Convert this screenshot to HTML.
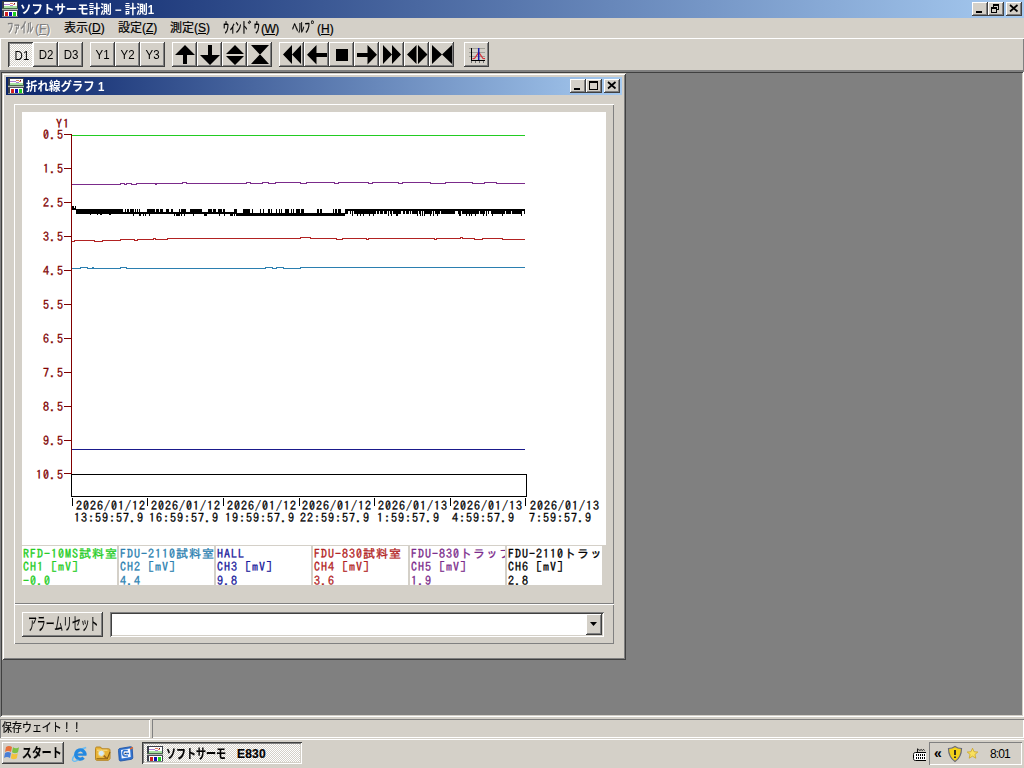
<!DOCTYPE html><html lang="ja"><head><meta charset="utf-8"><title>ソフトサーモ計測 - 計測1</title><style>
*{box-sizing:border-box;margin:0;padding:0}
html,body{width:1024px;height:768px;overflow:hidden;background:#d4d0c8}
body{position:relative;font-family:"Liberation Sans","Noto Sans CJK JP",sans-serif;font-size:12px;color:#000;line-height:1}
.abs{position:absolute}
.ui{font-family:"Liberation Sans","Noto Sans CJK JP",sans-serif;font-size:12px;white-space:nowrap;-webkit-text-stroke:0.2px currentColor}
.mono{font-family:"IPAGothic","Liberation Mono",monospace;font-size:12px;letter-spacing:1px;white-space:pre;line-height:13px;-webkit-text-stroke:0.3px currentColor}
.title{position:absolute;height:18px;background:linear-gradient(90deg,#0a246a 0%,#a6caf0 100%);color:#fff;font-weight:bold}
.title .t{position:absolute;top:2px;font-size:12px;line-height:16px;white-space:nowrap;font-weight:bold;transform-origin:0 50%;transform:scaleX(0.955)}
.cb{position:absolute;width:16px;height:14px;background:#d4d0c8;box-shadow:inset -1px -1px 0 #404040,inset 1px 1px 0 #fff,inset -2px -2px 0 #808080}
.cb svg{position:absolute;left:0;top:0}
.tb{position:absolute;top:42px;width:25px;height:25px;background:#d4d0c8;box-shadow:inset -1px -1px 0 #404040,inset 1px 1px 0 #fff,inset -2px -2px 0 #808080;text-align:center;font-size:12.500px;line-height:27px}
.tb span{display:inline-block;transform:scaleX(0.92)}
.tb svg{position:absolute;left:0;top:0}
.tb.down{background-color:#fff;background-image:conic-gradient(#d4d0c8 25%,#fff 0 50%,#d4d0c8 0 75%,#fff 0);background-size:2px 2px;box-shadow:inset 1px 1px 0 #404040,inset -1px -1px 0 #fff,inset 2px 2px 0 #808080;line-height:29px;text-indent:1px}
.menu{-webkit-text-stroke:0.2px currentColor;position:absolute;top:22px;font-size:12px;line-height:12px;white-space:nowrap}
.menu u{text-decoration:underline;text-underline-offset:1px}
.hk{font-family:"IPAGothic","Noto Sans CJK JP",monospace;font-size:15px;display:inline-block;transform:scaleX(0.82);transform-origin:0 50%;line-height:12px;vertical-align:baseline}
.raised{position:absolute;box-shadow:inset 1px 1px 0 #fff,inset -1px -1px 0 #808080}
.sx{display:inline-block;transform-origin:0 50%;white-space:nowrap}
.leg{position:absolute;top:546px;height:39px;background:#fff;overflow:hidden}
.leg div{position:absolute;left:1px}
</style></head><body>
<div class="title" style="left:0;top:0;width:1024px"><svg class="abs" style="left:2px;top:1px" width="16" height="16" viewBox="0 0 16 16" shape-rendering="crispEdges">
<rect x="0" y="0" width="16" height="16" fill="#3a3f4a"/>
<rect x="2" y="1" width="13" height="6" fill="#fff"/>
<rect x="2" y="5" width="13" height="2" fill="#a6e0a0"/>
<path d="M2 3.5h6M8 4.5h3" stroke="#b080d0" stroke-width="1"/>
<path d="M8 2.5h3M11 3.5h2" stroke="#e08060" stroke-width="1"/>
<rect x="12" y="2" width="1" height="1" fill="#601040"/>
<rect x="0" y="7" width="16" height="1" fill="#4a6a4a"/>
<rect x="0" y="8" width="16" height="1" fill="#b8b8b8"/>
<rect x="0" y="9" width="16" height="1" fill="#50505a"/>
<rect x="2" y="10" width="13" height="5" fill="#fff"/>
<rect x="3" y="11" width="3" height="4" fill="#d02020"/>
<rect x="7" y="11" width="3" height="4" fill="#1010b0"/>
<rect x="11" y="11" width="3" height="4" fill="#20d020"/>
<rect x="0" y="15" width="16" height="1" fill="#7a8088"/>
</svg><span class="t" id="mt" style="left:20px">ソフトサーモ計測 − 計測1</span></div>
<div class="cb" style="left:972px;top:2px"><svg width="16" height="14"><rect x="4" y="9" width="6" height="2" fill="#000"/></svg></div><div class="cb" style="left:988px;top:2px"><svg width="16" height="14"><path d="M5 2h6v6h-2v-1h1v-3h-4v1h-1z M3 5h6v6h-6z M4 7v3h4v-3z" fill="#000" fill-rule="evenodd"/></svg></div><div class="cb" style="left:1006px;top:2px"><svg width="16" height="14"><path d="M4 3l7.500 6.500M11.500 3l-7.500 6.500" stroke="#000" stroke-width="1.700" fill="none"/></svg></div>
<div class="menu" id="m0" style="left:7px;color:#808080;text-shadow:1px 1px 0 #fff"><span class="hk" style="margin-right:-4px;transform:scaleX(0.88)">ﾌｧｲﾙ</span><span style="margin-left:2px">(<u>F</u>)</span></div>
<div class="menu" id="m1" style="left:64px">表示(<u>D</u>)</div>
<div class="menu" id="m2" style="left:118px">設定(<u>Z</u>)</div>
<div class="menu" id="m3" style="left:170px">測定(<u>S</u>)</div>
<div class="menu" id="m4" style="left:223px"><span class="hk" style="margin-right:-8px">ｳｨﾝﾄﾞｳ</span><span style="margin-left:1px;letter-spacing:-0.6px">(<u>W</u>)</span></div>
<div class="menu" id="m5" style="left:292px"><span class="hk" style="margin-right:-5px">ﾍﾙﾌﾟ</span><span style="margin-left:0px">(<u>H</u>)</span></div>
<div class="abs" style="left:0;top:38px;width:1024px;height:1px;background:#fff"></div>
<div class="abs" style="left:1023px;top:39px;width:1px;height:31px;background:#808080"></div>
<div class="abs" style="left:0;top:70px;width:1024px;height:1px;background:#808080"></div>
<div class="abs" style="left:0;top:38px;width:1px;height:32px;background:#fff"></div>
<div class="tb down" style="left:8px"><span>D1</span></div><div class="tb " style="left:33px"><span>D2</span></div><div class="tb " style="left:58px"><span>D3</span></div><div class="tb " style="left:90px"><span>Y1</span></div><div class="tb " style="left:115px"><span>Y2</span></div><div class="tb " style="left:140px"><span>Y3</span></div>
<div class="tb " style="left:172px"><svg width="25" height="25" viewBox="0 0 25 25"><path d="M13 3L23 13H15V22H11V13H3Z" fill="#000"/></svg></div>
<div class="tb " style="left:197px"><svg width="25" height="25" viewBox="0 0 25 25"><path d="M11 3H15V13H23L13 23L3 13H11Z" fill="#000"/></svg></div>
<div class="tb " style="left:222px"><svg width="25" height="25" viewBox="0 0 25 25"><path d="M13 3L22 12H4Z M4 14H22L13 23Z" fill="#000"/></svg></div>
<div class="tb " style="left:247px"><svg width="25" height="25" viewBox="0 0 25 25"><path d="M4 3H22L13 12.700Z M4 22H22L13 12.300Z" fill="#000"/></svg></div>
<div class="tb " style="left:279px"><svg width="25" height="25" viewBox="0 0 25 25"><path d="M13 3V22L4 12.500Z M22 3V22L13 12.500Z" fill="#000"/></svg></div>
<div class="tb " style="left:304px"><svg width="25" height="25" viewBox="0 0 25 25"><path d="M3 12.700L12.500 3V11H23V15H12.500V22.500Z" fill="#000"/></svg></div>
<div class="tb " style="left:329px"><svg width="25" height="25" viewBox="0 0 25 25"><rect x="7" y="7" width="12" height="12" fill="#000"/></svg></div>
<div class="tb " style="left:354px"><svg width="25" height="25" viewBox="0 0 25 25"><path d="M23 12.700L13.500 3V11H3V15H13.500V22.500Z" fill="#000"/></svg></div>
<div class="tb " style="left:379px"><svg width="25" height="25" viewBox="0 0 25 25"><path d="M4 3V22L13 12.500Z M13 3V22L22 12.500Z" fill="#000"/></svg></div>
<div class="tb " style="left:404px"><svg width="25" height="25" viewBox="0 0 25 25"><path d="M12.500 3V22L3 12.500Z M14 3V22L23.500 12.500Z" fill="#000"/></svg></div>
<div class="tb " style="left:429px"><svg width="25" height="25" viewBox="0 0 25 25"><path d="M3 3V22L13 12.500Z M23 3V22L13 12.500Z" fill="#000"/></svg></div>
<div class="tb " style="left:464px"><svg width="25" height="25" viewBox="0 0 25 25"><g shape-rendering="crispEdges"><path d="M5 6.500h16M5 10.500h16M5 14.500h16" stroke="#a0a098" stroke-width="1"/><path d="M7.500 6v13M7 18.500h14" stroke="#000" stroke-width="1"/><path d="M7.500 19v2M11.500 19v2M15.500 19v2M19.500 19v2" stroke="#707070" stroke-width="1"/></g><path d="M8.500 16.700L10.500 16.500L14.800 10.300L19 16.500L21 16.700" stroke="#d83038" stroke-width="1.200" fill="none"/><path d="M14.700 6v12" stroke="#1818b0" stroke-width="1.500"/></svg></div>
<div class="abs" style="left:0;top:71px;width:1024px;height:646px;background:#808080;box-shadow:inset 1px 1px 0 #808080,inset -1px -1px 0 #fff,inset 2px 2px 0 #404040,inset -2px -2px 0 #d4d0c8"></div>
<div class="abs" style="left:2px;top:73px;width:624px;height:587px;background:#d4d0c8;box-shadow:inset 1px 1px 0 #d4d0c8,inset -1px -1px 0 #404040,inset 2px 2px 0 #fff,inset -2px -2px 0 #808080"></div>
<div class="title" style="left:6px;top:77px;width:616px"><svg class="abs" style="left:2px;top:1px" width="16" height="16" viewBox="0 0 16 16" shape-rendering="crispEdges">
<rect x="0" y="0" width="16" height="16" fill="#3a3f4a"/>
<rect x="2" y="1" width="13" height="6" fill="#fff"/>
<rect x="2" y="5" width="13" height="2" fill="#a6e0a0"/>
<path d="M2 3.5h6M8 4.5h3" stroke="#b080d0" stroke-width="1"/>
<path d="M8 2.5h3M11 3.5h2" stroke="#e08060" stroke-width="1"/>
<rect x="12" y="2" width="1" height="1" fill="#601040"/>
<rect x="0" y="7" width="16" height="1" fill="#4a6a4a"/>
<rect x="0" y="8" width="16" height="1" fill="#b8b8b8"/>
<rect x="0" y="9" width="16" height="1" fill="#50505a"/>
<rect x="2" y="10" width="13" height="5" fill="#fff"/>
<rect x="3" y="11" width="3" height="4" fill="#d02020"/>
<rect x="7" y="11" width="3" height="4" fill="#1010b0"/>
<rect x="11" y="11" width="3" height="4" fill="#20d020"/>
<rect x="0" y="15" width="16" height="1" fill="#7a8088"/>
</svg><span class="t" id="ct" style="left:20px">折れ線グラフ 1</span></div>
<div class="cb" style="left:570px;top:79px"><svg width="16" height="14"><rect x="4" y="9" width="6" height="2" fill="#000"/></svg></div><div class="cb" style="left:586px;top:79px"><svg width="16" height="14"><path d="M3 2h9v9h-9z M4 4v6h7v-6z" fill="#000" fill-rule="evenodd"/></svg></div><div class="cb" style="left:604px;top:79px"><svg width="16" height="14"><path d="M4 3l7.500 6.500M11.500 3l-7.500 6.500" stroke="#000" stroke-width="1.700" fill="none"/></svg></div>
<div class="raised" style="left:14px;top:104px;width:600px;height:500px"></div>
<div class="abs" style="left:22px;top:112px;width:584px;height:433px;background:#fff"></div>
<svg class="abs" style="left:0;top:0" width="640" height="600" viewBox="0 0 640 600" shape-rendering="crispEdges" fill="none" stroke-width="1">
<path d="M71.5 134V474" stroke="#800000"/>
<path d="M64 134.5H71M64 168.5H71M64 202.5H71M64 236.5H71M64 270.5H71M64 304.5H71M64 338.5H71M64 372.5H71M64 406.5H71M64 440.5H71M64 473.5H71" stroke="#800000"/>
<path d="M71.500 474.500H526.500V496.500H71.500Z" stroke="#000"/>
<path d="M72.5 498V506M147.5 498V506M223.5 498V506M299.5 498V506M374.5 498V506M450.5 498V506M525.5 498V506" stroke="#000"/>
<path d="M72 135.5H525" stroke="#22cc22"/>
<path d="M72 184.5H120H120V183.5H124H124V184.5H126H126V183.5H131H131V184.5H136H136V183.5H155H155V184.5H156H156V183.5H182H182V182.5H186H186V183.5H246H246V182.5H250H250V183.5H262H262V182.5H268H268V183.5H275H275V182.5H300H300V183.5H306H306V182.5H334H334V183.5H338H338V182.5H368H368V183.5H372H372V182.5H398H398V183.5H402H402V182.5H430H430V183.5H445H445V182.5H472H472V183.5H484H484V182.5H496H496V183.5H525" stroke="#7b2b8b"/>
<path d="M72 241.5H74H74V240.5H94H94V241.5H102H102V240.5H120H120V239.5H134H134V240.5H137H137V239.5H153H153V238.5H155H155V239.5H167H167V238.5H300H300V237.5H310H310V238.5H336H336V239.5H342H342V238.5H366H366V239.5H368H368V238.5H434H434V239.5H436H436V238.5H460H460V237.5H462H462V238.5H474H474V239.5H482H482V238.5H502H502V239.5H525" stroke="#b22222"/>
<path d="M72 268.5H80H80V267.5H87H87V268.5H92H92V267.5H93H93V268.5H120H120V267.5H126H126V268.5H265H265V267.5H272H272V268.5H276H276V267.5H283H283V268.5H300H300V267.5H525" stroke="#2b7fb0"/>
<path d="M72 449.5H525" stroke="#1a1a8c"/>
<path d="M72 206h1v4h-1zM73 206h1v4h-1zM74 208h1v2h-1zM75 206h1v4h-1zM76 209h1v5h-1zM77 209h1v5h-1zM78 209h1v5h-1zM79 209h1v5h-1zM80 209h1v5h-1zM81 209h1v5h-1zM82 209h1v5h-1zM83 209h1v5h-1zM84 209h1v5h-1zM85 209h1v5h-1zM86 209h1v5h-1zM87 209h1v5h-1zM88 209h1v5h-1zM89 209h1v5h-1zM90 209h1v6h-1zM91 209h1v5h-1zM92 209h1v5h-1zM93 209h1v5h-1zM94 209h1v5h-1zM95 209h1v5h-1zM96 209h1v5h-1zM97 209h1v6h-1zM98 209h1v5h-1zM99 209h1v5h-1zM100 209h1v6h-1zM101 209h1v6h-1zM102 209h1v5h-1zM103 209h1v5h-1zM104 209h1v5h-1zM105 209h1v5h-1zM106 209h1v5h-1zM107 209h1v5h-1zM108 209h1v5h-1zM109 209h1v6h-1zM110 209h1v6h-1zM111 209h1v5h-1zM112 209h1v5h-1zM113 209h1v5h-1zM114 209h1v5h-1zM115 209h1v5h-1zM116 209h1v5h-1zM117 209h1v5h-1zM118 209h1v5h-1zM119 209h1v5h-1zM120 209h1v5h-1zM121 209h1v5h-1zM122 209h1v5h-1zM123 212h1v2h-1zM124 212h1v2h-1zM125 209h1v5h-1zM126 212h1v2h-1zM127 209h1v5h-1zM128 209h1v5h-1zM129 212h1v2h-1zM130 209h1v5h-1zM131 209h1v5h-1zM132 209h1v5h-1zM133 209h1v7h-1zM134 212h1v2h-1zM135 209h1v5h-1zM136 212h1v2h-1zM137 209h1v5h-1zM138 212h1v2h-1zM139 209h1v7h-1zM140 212h1v4h-1zM141 212h1v2h-1zM142 212h1v2h-1zM143 212h1v4h-1zM144 212h1v2h-1zM145 212h1v4h-1zM146 212h1v2h-1zM147 209h1v5h-1zM148 209h1v5h-1zM149 209h1v7h-1zM150 209h1v5h-1zM151 209h1v5h-1zM152 209h1v5h-1zM153 209h1v5h-1zM154 209h1v5h-1zM155 212h1v2h-1zM156 209h1v5h-1zM157 209h1v5h-1zM158 209h1v5h-1zM159 212h1v2h-1zM160 209h1v5h-1zM161 209h1v5h-1zM162 209h1v5h-1zM163 212h1v2h-1zM164 212h1v2h-1zM165 212h1v2h-1zM166 209h1v5h-1zM167 209h1v5h-1zM168 209h1v5h-1zM169 212h1v2h-1zM170 212h1v2h-1zM171 209h1v5h-1zM172 209h1v5h-1zM173 212h1v2h-1zM174 212h1v4h-1zM175 212h1v2h-1zM176 212h1v4h-1zM177 212h1v4h-1zM178 212h1v4h-1zM179 209h1v7h-1zM180 212h1v2h-1zM181 209h1v7h-1zM182 209h1v5h-1zM183 209h1v5h-1zM184 209h1v7h-1zM185 209h1v5h-1zM186 212h1v2h-1zM187 212h1v2h-1zM188 212h1v2h-1zM189 212h1v2h-1zM190 209h1v5h-1zM191 209h1v5h-1zM192 209h1v5h-1zM193 209h1v7h-1zM194 209h1v5h-1zM195 209h1v5h-1zM196 209h1v5h-1zM197 209h1v5h-1zM198 209h1v5h-1zM199 209h1v5h-1zM200 209h1v5h-1zM201 209h1v5h-1zM202 212h1v2h-1zM203 212h1v2h-1zM204 212h1v4h-1zM205 212h1v4h-1zM206 212h1v4h-1zM207 212h1v2h-1zM208 209h1v5h-1zM209 209h1v5h-1zM210 209h1v5h-1zM211 209h1v5h-1zM212 212h1v2h-1zM213 209h1v5h-1zM214 209h1v5h-1zM215 209h1v5h-1zM216 212h1v2h-1zM217 212h1v2h-1zM218 209h1v5h-1zM219 209h1v7h-1zM220 209h1v5h-1zM221 209h1v5h-1zM222 212h1v2h-1zM223 209h1v5h-1zM224 209h1v7h-1zM225 212h1v2h-1zM226 212h1v2h-1zM227 212h1v2h-1zM228 212h1v2h-1zM229 212h1v2h-1zM230 212h1v4h-1zM231 212h1v4h-1zM232 212h1v4h-1zM233 212h1v2h-1zM234 209h1v7h-1zM235 209h1v5h-1zM236 209h1v7h-1zM237 213h1v3h-1zM238 213h1v3h-1zM239 213h1v3h-1zM240 213h1v3h-1zM241 213h1v3h-1zM242 213h1v3h-1zM243 209h1v7h-1zM244 209h1v7h-1zM245 209h1v7h-1zM246 209h1v7h-1zM247 209h1v7h-1zM248 209h1v7h-1zM249 209h1v7h-1zM250 213h1v3h-1zM251 213h1v3h-1zM252 209h1v7h-1zM253 213h1v3h-1zM254 213h1v3h-1zM255 213h1v3h-1zM256 213h1v3h-1zM257 213h1v3h-1zM258 213h1v3h-1zM259 213h1v3h-1zM260 209h1v7h-1zM261 213h1v3h-1zM262 213h1v3h-1zM263 209h1v7h-1zM264 213h1v3h-1zM265 213h1v3h-1zM266 213h1v3h-1zM267 213h1v3h-1zM268 209h1v7h-1zM269 209h1v7h-1zM270 213h1v3h-1zM271 209h1v7h-1zM272 213h1v3h-1zM273 213h1v3h-1zM274 213h1v3h-1zM275 213h1v3h-1zM276 209h1v7h-1zM277 213h1v3h-1zM278 213h1v3h-1zM279 209h1v7h-1zM280 213h1v3h-1zM281 209h1v7h-1zM282 213h1v3h-1zM283 213h1v3h-1zM284 213h1v3h-1zM285 209h1v7h-1zM286 209h1v7h-1zM287 209h1v7h-1zM288 209h1v7h-1zM289 213h1v3h-1zM290 213h1v3h-1zM291 209h1v7h-1zM292 213h1v3h-1zM293 209h1v7h-1zM294 213h1v3h-1zM295 213h1v3h-1zM296 209h1v7h-1zM297 209h1v7h-1zM298 209h1v7h-1zM299 209h1v7h-1zM300 213h1v3h-1zM301 209h1v7h-1zM302 209h1v7h-1zM303 209h1v7h-1zM304 213h1v3h-1zM305 213h1v3h-1zM306 213h1v3h-1zM307 213h1v3h-1zM308 213h1v3h-1zM309 213h1v3h-1zM310 213h1v3h-1zM311 213h1v3h-1zM312 213h1v3h-1zM313 213h1v3h-1zM314 213h1v3h-1zM315 213h1v3h-1zM316 213h1v3h-1zM317 209h1v7h-1zM318 209h1v7h-1zM319 213h1v3h-1zM320 209h1v7h-1zM321 209h1v7h-1zM322 213h1v3h-1zM323 213h1v3h-1zM324 213h1v3h-1zM325 213h1v3h-1zM326 213h1v3h-1zM327 213h1v3h-1zM328 213h1v3h-1zM329 213h1v3h-1zM330 213h1v3h-1zM331 213h1v3h-1zM332 213h1v3h-1zM333 209h1v7h-1zM334 213h1v3h-1zM335 209h1v7h-1zM336 209h1v7h-1zM337 213h1v3h-1zM338 209h1v7h-1zM339 209h1v7h-1zM340 209h1v7h-1zM341 213h1v3h-1zM342 213h1v3h-1zM343 213h1v3h-1zM344 213h1v3h-1zM345 209h1v5h-1zM346 209h1v5h-1zM347 209h1v5h-1zM348 209h1v2h-1zM349 209h1v2h-1zM350 209h1v5h-1zM351 209h1v2h-1zM352 209h1v7h-1zM353 209h1v2h-1zM354 209h1v5h-1zM355 209h1v5h-1zM356 209h1v5h-1zM357 209h1v7h-1zM358 209h1v5h-1zM359 209h1v5h-1zM360 209h1v7h-1zM361 209h1v5h-1zM362 209h1v5h-1zM363 209h1v7h-1zM364 209h1v5h-1zM365 209h1v5h-1zM366 209h1v5h-1zM367 209h1v5h-1zM368 209h1v5h-1zM369 209h1v7h-1zM370 209h1v5h-1zM371 209h1v5h-1zM372 209h1v5h-1zM373 209h1v7h-1zM374 209h1v5h-1zM375 209h1v5h-1zM376 209h1v2h-1zM377 209h1v5h-1zM378 209h1v5h-1zM379 209h1v2h-1zM380 209h1v5h-1zM381 209h1v5h-1zM382 209h1v5h-1zM383 209h1v2h-1zM384 209h1v5h-1zM385 209h1v5h-1zM386 209h1v5h-1zM387 209h1v2h-1zM388 209h1v7h-1zM389 209h1v2h-1zM390 209h1v5h-1zM391 209h1v7h-1zM392 209h1v2h-1zM393 209h1v5h-1zM394 209h1v5h-1zM395 209h1v5h-1zM396 209h1v7h-1zM397 209h1v7h-1zM398 209h1v5h-1zM399 209h1v5h-1zM400 209h1v5h-1zM401 209h1v2h-1zM402 209h1v2h-1zM403 209h1v5h-1zM404 209h1v5h-1zM405 209h1v2h-1zM406 209h1v5h-1zM407 209h1v5h-1zM408 209h1v5h-1zM409 209h1v2h-1zM410 209h1v5h-1zM411 209h1v2h-1zM412 209h1v5h-1zM413 209h1v5h-1zM414 209h1v5h-1zM415 209h1v5h-1zM416 209h1v5h-1zM417 209h1v7h-1zM418 209h1v2h-1zM419 209h1v5h-1zM420 209h1v7h-1zM421 209h1v2h-1zM422 209h1v7h-1zM423 209h1v2h-1zM424 209h1v7h-1zM425 209h1v5h-1zM426 209h1v5h-1zM427 209h1v5h-1zM428 209h1v5h-1zM429 209h1v5h-1zM430 209h1v7h-1zM431 209h1v5h-1zM432 209h1v2h-1zM433 209h1v7h-1zM434 209h1v2h-1zM435 209h1v5h-1zM436 209h1v5h-1zM437 209h1v7h-1zM438 209h1v5h-1zM439 209h1v5h-1zM440 209h1v2h-1zM441 209h1v5h-1zM442 209h1v5h-1zM443 209h1v5h-1zM444 209h1v5h-1zM445 209h1v5h-1zM446 209h1v5h-1zM447 209h1v5h-1zM448 209h1v5h-1zM449 209h1v5h-1zM450 209h1v5h-1zM451 209h1v5h-1zM452 209h1v5h-1zM453 209h1v5h-1zM454 209h1v5h-1zM455 209h1v2h-1zM456 209h1v2h-1zM457 209h1v2h-1zM458 209h1v5h-1zM459 209h1v7h-1zM460 209h1v7h-1zM461 209h1v2h-1zM462 209h1v5h-1zM463 209h1v5h-1zM464 209h1v5h-1zM465 209h1v5h-1zM466 209h1v7h-1zM467 209h1v5h-1zM468 209h1v5h-1zM469 209h1v7h-1zM470 209h1v5h-1zM471 209h1v7h-1zM472 209h1v5h-1zM473 209h1v5h-1zM474 209h1v5h-1zM475 209h1v7h-1zM476 209h1v5h-1zM477 209h1v5h-1zM478 209h1v5h-1zM479 209h1v2h-1zM480 209h1v5h-1zM481 209h1v5h-1zM482 209h1v5h-1zM483 209h1v7h-1zM484 209h1v5h-1zM485 209h1v2h-1zM486 209h1v7h-1zM487 209h1v2h-1zM488 209h1v5h-1zM489 209h1v2h-1zM490 209h1v2h-1zM491 209h1v5h-1zM492 209h1v7h-1zM493 209h1v5h-1zM494 209h1v5h-1zM495 209h1v5h-1zM496 209h1v5h-1zM497 209h1v5h-1zM498 209h1v5h-1zM499 209h1v5h-1zM500 209h1v5h-1zM501 209h1v5h-1zM502 209h1v7h-1zM503 209h1v5h-1zM504 209h1v5h-1zM505 209h1v2h-1zM506 209h1v5h-1zM507 209h1v5h-1zM508 209h1v5h-1zM509 209h1v5h-1zM510 209h1v5h-1zM511 209h1v2h-1zM512 209h1v5h-1zM513 209h1v5h-1zM514 209h1v5h-1zM515 209h1v5h-1zM516 209h1v5h-1zM517 209h1v5h-1zM518 209h1v5h-1zM519 209h1v5h-1zM520 209h1v5h-1zM521 209h1v7h-1zM522 209h1v2h-1zM523 209h1v2h-1zM524 209h1v5h-1z" fill="#000" stroke="none"/>
</svg>
<div class="mono abs" style="right:960px;top:128px;color:#800000">0.5</div>
<div class="mono abs" style="right:960px;top:162px;color:#800000">1.5</div>
<div class="mono abs" style="right:960px;top:196px;color:#800000">2.5</div>
<div class="mono abs" style="right:960px;top:230px;color:#800000">3.5</div>
<div class="mono abs" style="right:960px;top:264px;color:#800000">4.5</div>
<div class="mono abs" style="right:960px;top:298px;color:#800000">5.5</div>
<div class="mono abs" style="right:960px;top:332px;color:#800000">6.5</div>
<div class="mono abs" style="right:960px;top:366px;color:#800000">7.5</div>
<div class="mono abs" style="right:960px;top:400px;color:#800000">8.5</div>
<div class="mono abs" style="right:960px;top:434px;color:#800000">9.5</div>
<div class="mono abs" style="right:960px;top:468px;color:#800000">10.5</div>
<div class="mono abs" style="left:56px;top:117px;color:#800000">Y1</div>
<div class="mono abs" style="left:76px;top:499px">2026/01/12</div>
<div class="mono abs" style="left:74px;top:511px">13:59:57.9</div>
<div class="mono abs" style="left:151px;top:499px">2026/01/12</div>
<div class="mono abs" style="left:149px;top:511px">16:59:57.9</div>
<div class="mono abs" style="left:227px;top:499px">2026/01/12</div>
<div class="mono abs" style="left:225px;top:511px">19:59:57.9</div>
<div class="mono abs" style="left:302px;top:499px">2026/01/12</div>
<div class="mono abs" style="left:300px;top:511px">22:59:57.9</div>
<div class="mono abs" style="left:378px;top:499px">2026/01/13</div>
<div class="mono abs" style="left:377px;top:511px">1:59:57.9</div>
<div class="mono abs" style="left:453px;top:499px">2026/01/13</div>
<div class="mono abs" style="left:452px;top:511px">4:59:57.9</div>
<div class="mono abs" style="left:530px;top:499px">2026/01/13</div>
<div class="mono abs" style="left:529px;top:511px">7:59:57.9</div>
<div class="leg mono" style="left:22px;width:95px;color:#22cc22"><div style="top:1px">RFD-10MS試料室</div><div style="top:14px">CH1 [mV]</div><div style="top:28px">-0.0</div></div>
<div class="leg mono" style="left:119px;width:95px;color:#2b7fb0"><div style="top:1px">FDU-2110試料室</div><div style="top:14px">CH2 [mV]</div><div style="top:28px">4.4</div></div>
<div class="leg mono" style="left:216px;width:95px;color:#1a1a9c"><div style="top:1px">HALL</div><div style="top:14px">CH3 [mV]</div><div style="top:28px">9.8</div></div>
<div class="leg mono" style="left:313px;width:95px;color:#b22222"><div style="top:1px">FDU-830試料室</div><div style="top:14px">CH4 [mV]</div><div style="top:28px">3.6</div></div>
<div class="leg mono" style="left:410px;width:95px;color:#7b2b8b"><div style="top:1px">FDU-830トラップ</div><div style="top:14px">CH5 [mV]</div><div style="top:28px">1.9</div></div>
<div class="leg mono" style="left:507px;width:95px;color:#000"><div style="top:1px">FDU-2110トラップ</div><div style="top:14px">CH6 [mV]</div><div style="top:28px">2.8</div></div>
<div class="raised" style="left:14px;top:604px;width:600px;height:40px"></div>
<div class="abs ui" style="left:22px;top:612px;width:81px;height:25px;background:#d4d0c8;box-shadow:inset -1px -1px 0 #404040,inset 1px 1px 0 #fff,inset -2px -2px 0 #808080;line-height:25px"><span class="sx" id="ab" style="position:absolute;left:6px;top:0px;font-size:17px;transform:scaleX(0.52)">アラームリセット</span></div>
<div class="abs" style="left:110px;top:612px;width:494px;height:25px;background:#fff;box-shadow:inset 1px 1px 0 #808080,inset -1px -1px 0 #fff,inset 2px 2px 0 #404040,inset -2px -2px 0 #d4d0c8"></div>
<div class="abs" style="left:586px;top:614px;width:16px;height:21px;background:#d4d0c8;box-shadow:inset -1px -1px 0 #404040,inset 1px 1px 0 #fff,inset -2px -2px 0 #808080"><svg class="abs" style="left:0;top:0" width="16" height="21"><path d="M4 8h7l-3.500 4z" fill="#000"/></svg></div>
<div class="abs" style="left:0;top:719px;width:150px;height:19px;box-shadow:inset 1px 1px 0 #808080,inset -1px -1px 0 #fff"></div>
<div class="abs" style="left:152px;top:719px;width:872px;height:19px;box-shadow:inset 1px 1px 0 #808080,inset -1px -1px 0 #fff"></div>
<div class="abs ui" style="left:2px;top:721px;line-height:14px"><span class="sx" id="st" style="transform:scaleX(0.83)">保存ウェイト！！</span></div>
<div class="abs" style="left:0;top:738px;width:1024px;height:30px;background:#d4d0c8;box-shadow:inset 0 1px 0 #d4d0c8,inset 0 2px 0 #fff"></div>
<div class="abs" style="left:2px;top:742px;width:62px;height:22px;background:#d4d0c8;box-shadow:inset -1px -1px 0 #404040,inset 1px 1px 0 #fff,inset -2px -2px 0 #808080"></div>
<svg class="abs" style="left:4px;top:744px" width="18" height="18" viewBox="0 0 18 18">
<path d="M2 3c2-1.200 4-1.200 6 0l-1 5c-2-1.200-4-1.200-6 0z" fill="#e8703a"/>
<path d="M9 3.300c2 1.200 4 1.200 6 0l-1 5c-2 1.200-4 1.200-6 0z" fill="#7cc242"/>
<path d="M1 9c2-1.200 4-1.200 6 0l-1 5c-2-1.200-4-1.200-6 0z" fill="#4a7fd6"/>
<path d="M7.800 9.300c2 1.200 4 1.200 6 0l-1 5c-2 1.200-4 1.200-6 0z" fill="#f3c23b"/>
</svg>
<div class="abs ui" style="left:22px;top:745px;font-weight:bold;line-height:16px;font-size:13px"><span class="sx" id="sb" style="transform:scaleX(0.76)">スタート</span></div>
<svg class="abs" style="left:71px;top:745px" width="18" height="18" viewBox="0 0 18 18">
<path d="M2 15.800c-2-2.500 4-10.800 13.200-13.300" stroke="#6abcf2" stroke-width="1.500" fill="none"/>
<path d="M13.900 9.500A4.600 4.600 0 1 0 12.600 12.700" stroke="#2488e0" stroke-width="3.300" fill="none"/>
<path d="M5.500 9.600h10" stroke="#2488e0" stroke-width="2.300"/>
<path d="M2.200 15.600c0.800 1.600 3.800 0.200 5.200-0.800" stroke="#6abcf2" stroke-width="1.400" fill="none"/>
</svg>
<svg class="abs" style="left:94px;top:745px" width="18" height="18" viewBox="0 0 18 18">
<path d="M1.500 3.500c0-1 0.500-1.500 1.500-1.500h3.500l1.500 1.800h6.500c1 0 1.500 0.500 1.500 1.500v8.200l-1.500 1.800h-11.500c-1 0-1.500-0.500-1.500-1.500z" fill="#e9b437" stroke="#b07d18" stroke-width="0.900"/>
<path d="M2.500 13.800h10.800l2.700-6.800" stroke="#8a5e10" stroke-width="1.100" fill="none"/>
<path d="M3 5.200h10.500" stroke="#f8dc88" stroke-width="1.200"/>
<circle cx="7.300" cy="8.300" r="3.100" fill="#d6eaf6" stroke="#f3cf6a" stroke-width="1"/>
<path d="M9.800 10.600l2.800 2.800" stroke="#a06a20" stroke-width="1.600"/>
</svg>
<svg class="abs" style="left:117px;top:745px" width="18" height="18" viewBox="0 0 18 18">
<path d="M2.500 3.500l11-1.800c1-0.100 1.600 0.400 1.700 1.300l0.600 9.500c0 1-0.500 1.600-1.400 1.800l-10.500 1.700c-1 0.100-1.600-0.400-1.700-1.300l-0.700-9.300c0-1 0.300-1.700 1-1.900z" fill="#2f73d0" stroke="#1a4ea0" stroke-width="0.800"/>
<path d="M4 5l9-1.500 0.700 8.500-9 1.500z" fill="#f4f8ff"/>
<path d="M10.800 5.500h-3.300c-2.300 0-2.300 5.500 0.200 5.500h3.300M8.800 8.400h3.200" stroke="#2f73d0" stroke-width="1.500" fill="none"/>
<path d="M9.300 8.600l-2.300 0.900 1.200-2z" fill="#111"/>
<path d="M13 4l3-1.500" stroke="#e06a30" stroke-width="1.500"/>
</svg>
<div class="abs" style="left:142px;top:742px;width:160px;height:22px;background-color:#fff;background-image:conic-gradient(#d4d0c8 25%,#fff 0 50%,#d4d0c8 0 75%,#fff 0);background-size:2px 2px;box-shadow:inset 1px 1px 0 #404040,inset -1px -1px 0 #fff,inset 2px 2px 0 #808080,inset -2px -2px 0 #d4d0c8"></div>
<svg class="abs" style="left:147px;top:746px" width="16" height="16" viewBox="0 0 16 16" shape-rendering="crispEdges">
<rect x="0" y="0" width="16" height="16" fill="#3a3f4a"/>
<rect x="2" y="1" width="13" height="6" fill="#fff"/>
<rect x="2" y="5" width="13" height="2" fill="#a6e0a0"/>
<path d="M2 3.5h6M8 4.5h3" stroke="#b080d0" stroke-width="1"/>
<path d="M8 2.5h3M11 3.5h2" stroke="#e08060" stroke-width="1"/>
<rect x="12" y="2" width="1" height="1" fill="#601040"/>
<rect x="0" y="7" width="16" height="1" fill="#4a6a4a"/>
<rect x="0" y="8" width="16" height="1" fill="#b8b8b8"/>
<rect x="0" y="9" width="16" height="1" fill="#50505a"/>
<rect x="2" y="10" width="13" height="5" fill="#fff"/>
<rect x="3" y="11" width="3" height="4" fill="#d02020"/>
<rect x="7" y="11" width="3" height="4" fill="#1010b0"/>
<rect x="11" y="11" width="3" height="4" fill="#20d020"/>
<rect x="0" y="15" width="16" height="1" fill="#7a8088"/>
</svg>
<div class="abs ui" style="left:166px;top:746px;font-weight:bold;line-height:16px;font-size:13px"><span class="sx" id="tk" style="transform:scaleX(0.77)">ソフトサーモ</span></div><div class="abs ui" style="left:237px;top:746px;font-weight:bold;line-height:16px;letter-spacing:0.2px">E830</div>
<div class="abs" style="left:929px;top:742px;width:93px;height:23px;box-shadow:inset 1px 1px 0 #808080,inset -1px -1px 0 #fff"></div>
<svg class="abs" style="left:912px;top:746px" width="16" height="16" viewBox="0 0 16 16">
<path d="M14 6.500h-10.500c-1.300 0-2 0.700-2 2v4c0 1.300 0.700 2 2 2h10.500" fill="#fff" stroke="#000" stroke-width="1"/>
<g shape-rendering="crispEdges" fill="#000"><path d="M4 8h1v2h-1zM6 8h1v2h-1zM8 8h1v2h-1zM10 8h1v2h-1zM12 8h1v2h-1zM4 11h1v2h-1zM6 11h1v2h-1zM8 11h1v2h-1zM10 11h1v2h-1zM12 11h1v2h-1z"/></g>
<path d="M5.500 6.500v-4M5.500 4.500l1.200-1 1.200 1 1.200-1 1.200 1 1.200-1 1.200 1" stroke="#000" stroke-width="0.900" fill="none"/>
</svg>
<div class="abs" style="left:934px;top:745px;font-size:14px;font-weight:bold;line-height:16px;letter-spacing:-2px">«</div>
<svg class="abs" style="left:946px;top:745px" width="18" height="18" viewBox="0 0 18 18">
<path d="M9 1.500c2 1.500 4 2 6.500 2c0 6-2 10-6.500 13c-4.500-3-6.500-7-6.500-13c2.500 0 4.500-0.500 6.500-2z" fill="#f2d21a" stroke="#6a6a7a" stroke-width="1.200"/>
<path d="M9 5v5M9 11.500v1.500" stroke="#222" stroke-width="1.800"/>
</svg>
<svg class="abs" style="left:966px;top:747px" width="13" height="13" viewBox="0 0 16 16">
<path d="M8 1.500l1.900 4.300 4.600 0.400-3.500 3 1.100 4.600-4.100-2.500-4.100 2.500 1.100-4.600-3.500-3 4.600-0.400z" fill="#f8e060" stroke="#c8a020" stroke-width="0.900"/>
</svg>
<div class="abs" style="left:990px;top:747px;font-size:12px;line-height:14px;letter-spacing:-0.9px">8:01</div>
</body></html>
